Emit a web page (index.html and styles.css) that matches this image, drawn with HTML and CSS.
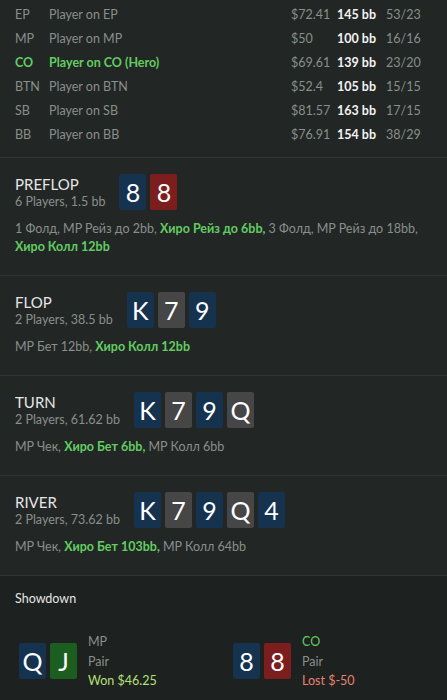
FILE: index.html
```html
<!DOCTYPE html>
<html>
<head>
<meta charset="utf-8">
<title>Hand history</title>
<link rel="stylesheet" href="styles.css">
</head>
<body>

<div class="players">
  <div class="prow"><span>EP</span><span>Player on EP</span><span>$72.41</span><b>145 bb</b><span>53/23</span></div>
  <div class="prow"><span>MP</span><span>Player on MP</span><span>$50</span><b>100 bb</b><span>16/16</span></div>
  <div class="prow hero"><span>CO</span><span>Player on CO (Hero)</span><span class="dim">$69.61</span><b>139 bb</b><span class="dim">23/20</span></div>
  <div class="prow"><span>BTN</span><span>Player on BTN</span><span>$52.4</span><b>105 bb</b><span>15/15</span></div>
  <div class="prow"><span>SB</span><span>Player on SB</span><span>$81.57</span><b>163 bb</b><span>17/15</span></div>
  <div class="prow"><span>BB</span><span>Player on BB</span><span>$76.91</span><b>154 bb</b><span>38/29</span></div>
</div>

<div class="street">
  <div class="head">
    <div class="title">
      <div class="name">PREFLOP</div>
      <div class="sub">6 Players, 1.5 bb</div>
    </div>
    <div class="cards"><span class="card c">8</span><span class="card h">8</span></div>
  </div>
  <div class="acts">1 Фолд, MP Рейз до 2bb, <b>Хиро Рейз до 6bb,</b> 3 Фолд, MP Рейз до 18bb, <b>Хиро Колл 12bb</b></div>
</div>

<div class="street">
  <div class="head">
    <div class="title">
      <div class="name">FLOP</div>
      <div class="sub">2 Players, 38.5 bb</div>
    </div>
    <div class="cards"><span class="card c">K</span><span class="card s">7</span><span class="card c">9</span></div>
  </div>
  <div class="acts">MP Бет 12bb, <b>Хиро Колл 12bb</b></div>
</div>

<div class="street">
  <div class="head">
    <div class="title">
      <div class="name">TURN</div>
      <div class="sub">2 Players, 61.62 bb</div>
    </div>
    <div class="cards"><span class="card c">K</span><span class="card s">7</span><span class="card c">9</span><span class="card s">Q</span></div>
  </div>
  <div class="acts">MP Чек, <b>Хиро Бет 6bb,</b> MP Колл 6bb</div>
</div>

<div class="street">
  <div class="head">
    <div class="title">
      <div class="name">RIVER</div>
      <div class="sub">2 Players, 73.62 bb</div>
    </div>
    <div class="cards"><span class="card c">K</span><span class="card s">7</span><span class="card c">9</span><span class="card s">Q</span><span class="card c">4</span></div>
  </div>
  <div class="acts">MP Чек, <b>Хиро Бет 103bb,</b> MP Колл 64bb</div>
</div>

<div class="showdown">
  <div class="sd-title">Showdown</div>
  <div class="sd-hands">
    <div class="hand">
      <div class="cards"><span class="card c">Q</span><span class="card d">J</span></div>
      <div class="info">
        <div>MP</div>
        <div>Pair</div>
        <div class="won">Won $46.25</div>
      </div>
    </div>
    <div class="hand">
      <div class="cards"><span class="card c">8</span><span class="card h">8</span></div>
      <div class="info">
        <div class="me">CO</div>
        <div>Pair</div>
        <div class="lost">Lost $-50</div>
      </div>
    </div>
  </div>
</div>

</body>
</html>
```

FILE: styles.css
```css
html, body {margin: 0; padding: 0;}
body {
  width: 447px;
  height: 700px;
  overflow: hidden;
  background: #1d211f;
  color: #8a8e8c;
  font-family: Lato, "Noto Sans", sans-serif;
  font-size: 12.5px;
}

/* players table */
.players {background: #222725; padding: 3px 15px 10px; border-bottom: 1px solid #2f3432;}
.prow {display: grid; grid-template-columns: 34px 1fr 46px 49px 46px; height: 24px; line-height: 24px; white-space: nowrap;}
.prow b {color: #f2f2f2; font-weight: 700;}
.prow.hero {color: #62cc62; font-weight: 700;}
.prow.hero .dim {color: #8a8e8c; font-weight: normal;}

/* streets */
.street {background: #222725; padding: 16px 15px 19px; border-bottom: 1px solid #2f3432;}
.head {display: flex; align-items: flex-start;}
.title {margin-right: 14px;}
.title .name {font-size: 15px; line-height: 20px; color: #e6e6e6;}
.title .sub {line-height: 16px;}
.acts {margin-top: 10px; line-height: 18px;}
.acts b {color: #62cc62; font-weight: 700;}

/* cards */
.cards {display: flex; gap: 4px;}
.card {
  width: 27px; height: 36px; border-radius: 2px;
  display: flex; align-items: center; justify-content: center;
  color: #fff; font-size: 25px; line-height: 36px;
}
.card.c {background: #15324f;}
.card.h {background: #7c1e1e;}
.card.s {background: #464646;}
.card.d {background: #1b5e1f;}

/* showdown */
.showdown {background: #1d211f; padding: 14px 15px 0;}
.sd-title {color: #e6e6e6; line-height: 18px;}
.sd-hands {display: grid; grid-template-columns: 214px 1fr; padding: 24px 0 0 4px;}
.hand {display: flex; align-items: center;}
.hand .info {margin-left: 11px; line-height: 19.5px;}
.info .won {color: #b3e07a;}
.info .lost {color: #e8806f;}
.info .me {color: #62cc62;}
```
